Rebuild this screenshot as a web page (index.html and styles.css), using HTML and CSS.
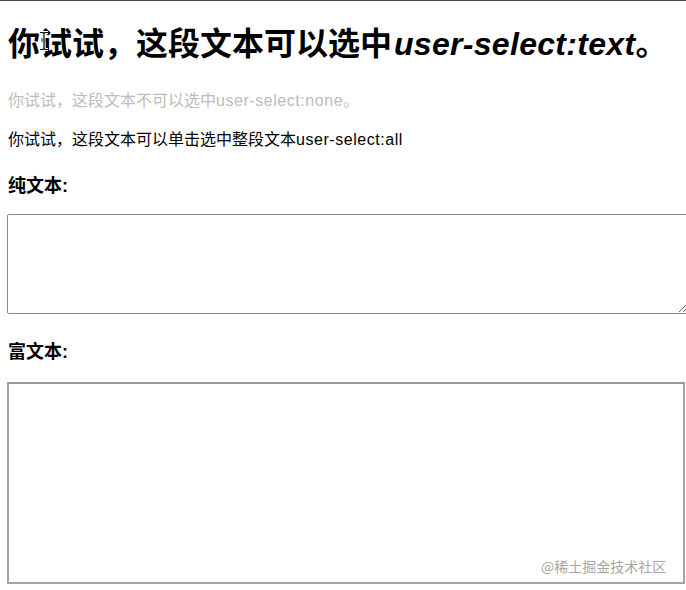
FILE: index.html
```html
<!DOCTYPE html>
<html lang="zh-CN">
<head>
<meta charset="utf-8">
<title>user-select</title>
<link rel="stylesheet" href="styles.css">
</head>
<body>
<main class="page">
  <h1 class="title">你试试，这段文本可以选中<em class="latin-t">user-select:text</em>。</h1>
  <p class="line none">你试试，这段文本不可以选中<span class="latin">user-select:none</span>。</p>
  <p class="line all">你试试，这段文本可以单击选中整段文本<span class="latin">user-select:all</span></p>
  <h3 class="label">纯文本:</h3>
  <textarea class="plain"></textarea>
  <h3 class="label label-rich">富文本:</h3>
  <div class="rich" contenteditable="true"></div>
</main>
<svg class="cursor" width="10" height="20" viewBox="0 0 10 20" aria-hidden="true">
  <path d="M1 1.5h3l1 1 1-1h3M5 2.5v15M1 18.5h3l1-1 1 1h3" fill="none" stroke="#fff" stroke-width="3"/>
  <path d="M1 1.5h3l1 1 1-1h3M5 2.5v15M1 18.5h3l1-1 1 1h3" fill="none" stroke="#000" stroke-width="1.2"/>
</svg>
<div class="watermark">@稀土掘金技术社区</div>
</body>
</html>
```

FILE: styles.css
```css
html {
  border-top: 1px solid #4a4a4a;
  background: #fff;
}
body {
  margin: 0;
  overflow: hidden;
  height: 589px;
  position: relative;
  font-family: "Liberation Sans", "Noto Sans CJK SC", sans-serif;
  color: #000;
}
.page {
  padding: 0 0 0 7px;
  display: flex;
  flex-direction: column;
  align-items: flex-start;
}
.title {
  margin: 21px 0 0 1px;
  font-size: 32px;
  line-height: 44px;
  font-weight: bold;
  white-space: nowrap;
}
.title em {
  font-style: italic;
}
.latin-t {
  letter-spacing: 0.3px;
  margin-left: 2px;
}
.latin {
  letter-spacing: 0.55px;
}
.line {
  margin: 0 0 0 1px;
  font-size: 16px;
  line-height: 22px;
  white-space: nowrap;
}
.none {
  margin-top: 24px;
  color: #bcbcbc;
  user-select: none;
}
.all {
  margin-top: 17px;
  user-select: all;
}
.label {
  margin: 24px 0 0 1px;
  font-size: 18px;
  line-height: 22px;
  font-weight: bold;
}
.label-rich {
  margin-top: 27px;
}
.plain {
  margin: 17px 0 0 0;
  box-sizing: border-box;
  width: 681px;
  height: 100px;
  border: 1px solid #8a8a8a;
  border-radius: 2px;
  padding: 2px;
  font-family: "Liberation Mono", monospace;
  font-size: 13px;
}
.rich {
  margin-top: 19px;
  box-sizing: border-box;
  width: 678px;
  height: 202px;
  border: 2px solid #a3a3a3;
  border-top-color: #9a9a9a;
}
.cursor {
  position: absolute;
  left: 39px;
  top: 30px;
}
.watermark {
  position: absolute;
  left: 541px;
  top: 555px;
  font-family: "Noto Sans CJK SC", sans-serif;
  font-size: 14px;
  line-height: 20px;
  color: #a6a6a6;
}
```
